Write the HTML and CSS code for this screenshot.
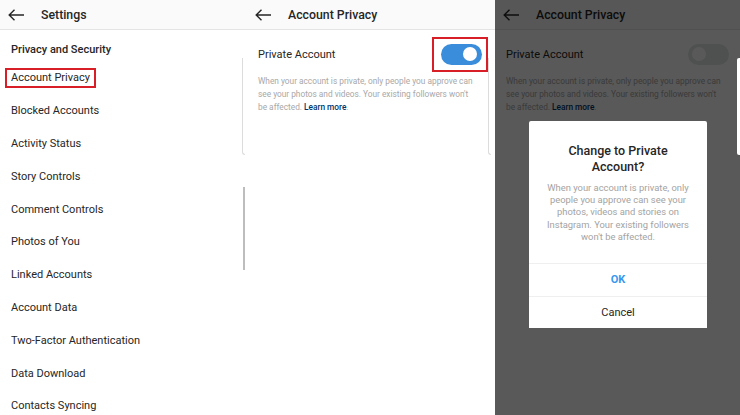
FILE: index.html
```html
<!DOCTYPE html>
<html lang="en">
<head>
  <meta charset="UTF-8" />
  <meta name="viewport" content="width=device-width, initial-scale=1.0"/>
  <title>Account Privacy</title>
  <link rel="stylesheet" href="styles.css">
</head>
<body>
  <div class="screens">

    <section class="screen screen-settings">
      <header class="topbar">
        <svg class="back" width="16" height="12" viewBox="0 0 16 12"><path d="M1 6h15M6.5 0.8L1.2 6l5.3 5.2" fill="none" stroke="#262626" stroke-width="1.4"/></svg>
        <h1>Settings</h1>
      </header>
      <h2 class="section-title">Privacy and Security</h2>
      <ul class="menu">
        <li><span class="marked">Account Privacy</span></li>
        <li>Blocked Accounts</li>
        <li>Activity Status</li>
        <li>Story Controls</li>
        <li>Comment Controls</li>
        <li>Photos of You</li>
        <li>Linked Accounts</li>
        <li>Account Data</li>
        <li>Two-Factor Authentication</li>
        <li>Data Download</li>
        <li>Contacts Syncing</li>
      </ul>
      <div class="card-edge"></div>
      <div class="scrollbar"></div>
    </section>

    <section class="screen screen-privacy">
      <header class="topbar">
        <svg class="back" width="16" height="12" viewBox="0 0 16 12"><path d="M1 6h15M6.5 0.8L1.2 6l5.3 5.2" fill="none" stroke="#262626" stroke-width="1.4"/></svg>
        <h1>Account Privacy</h1>
      </header>
      <div class="setting-row">
        <span>Private Account</span>
        <span class="toggle-mark"><span class="toggle toggle-on"></span></span>
      </div>
      <p class="setting-note">When your account is private, only people you approve can<br>see your photos and videos. Your existing followers won't<br>be affected. <a href="#">Learn more</a>.</p>
      <div class="card-edge"></div>
    </section>

    <section class="screen screen-dialog">
      <header class="topbar">
        <svg class="back" width="16" height="12" viewBox="0 0 16 12"><path d="M1 6h15M6.5 0.8L1.2 6l5.3 5.2" fill="none" stroke="#262626" stroke-width="1.4"/></svg>
        <h1>Account Privacy</h1>
      </header>
      <div class="setting-row">
        <span>Private Account</span>
        <span class="toggle"></span>
      </div>
      <p class="setting-note">When your account is private, only people you approve can<br>see your photos and videos. Your existing followers won't<br>be affected. <a href="#">Learn more</a>.</p>

      <div class="dim"></div>
      <div class="peek"></div>
      <div class="dialog">
        <h3 class="dialog-title">Change to Private<br>Account?</h3>
        <p class="dialog-text">When your account is private, only<br>people you approve can see your<br>photos, videos and stories on<br>Instagram. Your existing followers<br>won't be affected.</p>
        <button class="dialog-btn dialog-ok">OK</button>
        <button class="dialog-btn">Cancel</button>
      </div>
    </section>

  </div>
</body>
</html>
```

FILE: styles.css
```css
body { margin: 0; background: #fff; font-family: Roboto, "Liberation Sans", Arial, sans-serif; color: #262626; }
.screens { display: flex; height: 415px; overflow: hidden; }
.screen { position: relative; height: 415px; overflow: hidden; background: #fff; }
.screen-settings { width: 245px; }
.screen-privacy { width: 250px; }
.screen-dialog { width: 245px; }

.topbar { height: 29px; border-bottom: 1px solid #e4e4e4; background: #fafafa; display: flex; align-items: center; gap: 17px; padding-left: 8px; }
.screen-privacy .topbar { padding-left: 10px; }
.topbar h1 { margin: 0; font-size: 12.3px; font-weight: 500; }
.back { flex: none; }

.section-title { margin: 0; padding: 12px 11px 3.6px; line-height: 16px; font-size: 11px; font-weight: 500; }
.menu { list-style: none; margin: 0; padding: 0; }
.menu li { height: 32.8px; display: flex; align-items: center; padding-left: 11px; font-size: 11px; }
.marked { border: 2px solid #d81f27; padding: 1px 4px; margin-left: -6px; line-height: 14px; }

.scrollbar { position: absolute; right: 0; top: 187px; width: 2.5px; height: 83px; background: #bdbdbd; }
.card-edge { position: absolute; top: 58px; width: 1px; height: 96px; border-left: 1px solid #dcdcdc; border-bottom: 1px solid #dcdcdc; border-bottom-left-radius: 3px; }
.screen-settings .card-edge { right: 0; width: 2px; }
.screen-privacy .card-edge { right: 4px; width: 2px; }

.setting-row { display: flex; align-items: center; justify-content: space-between; height: 22px; margin-top: 13px; padding: 0 13px; font-size: 11px; }
.screen-dialog .setting-row { padding: 0 11px; }
.toggle { position: relative; width: 41px; height: 21px; border-radius: 11px; background: #dfe8e2; }
.toggle::after { content: ""; position: absolute; top: 3.5px; left: 4px; width: 14px; height: 14px; border-radius: 50%; background: #fff; }
.toggle-on { display: block; background: #3a8ddb; }
.toggle-on::after { left: auto; right: 5px; }
.toggle-mark { border: 2px solid #d81f27; padding: 5px 4px 5px 7px; margin: -7px -6px -7px 0; }

.setting-note { margin: 9.5px 0 0; padding: 0 13px; font-size: 8.3px; line-height: 13px; color: #a8a8a8; }
.screen-dialog .setting-note { padding: 0 11px; }
.setting-note a { color: #003569; font-weight: 500; text-decoration: none; }

.dim { position: absolute; inset: 0; background: rgba(0, 0, 0, 0.65); }
.peek { position: absolute; right: 0; top: 58px; width: 3px; height: 97px; background: #fff; border-radius: 2px 0 0 2px; }
.dialog { position: absolute; left: 34px; top: 121px; width: 178px; background: #fff; border-radius: 2px; text-align: center; }
.dialog-title { margin: 0; padding-top: 22px; font-size: 12.5px; line-height: 16px; font-weight: 500; }
.dialog-text { margin: 7px 0 0; padding: 0 8px 20px; font-size: 9.4px; line-height: 12.2px; color: #a3a3a3; }
.dialog-btn { display: block; width: 100%; height: 32.5px; border: 0; border-top: 1px solid #efefef; background: #fff; font-family: inherit; font-size: 11px; color: #262626; padding: 0; }
.dialog-ok { color: #3897f0; font-weight: 700; }
```
